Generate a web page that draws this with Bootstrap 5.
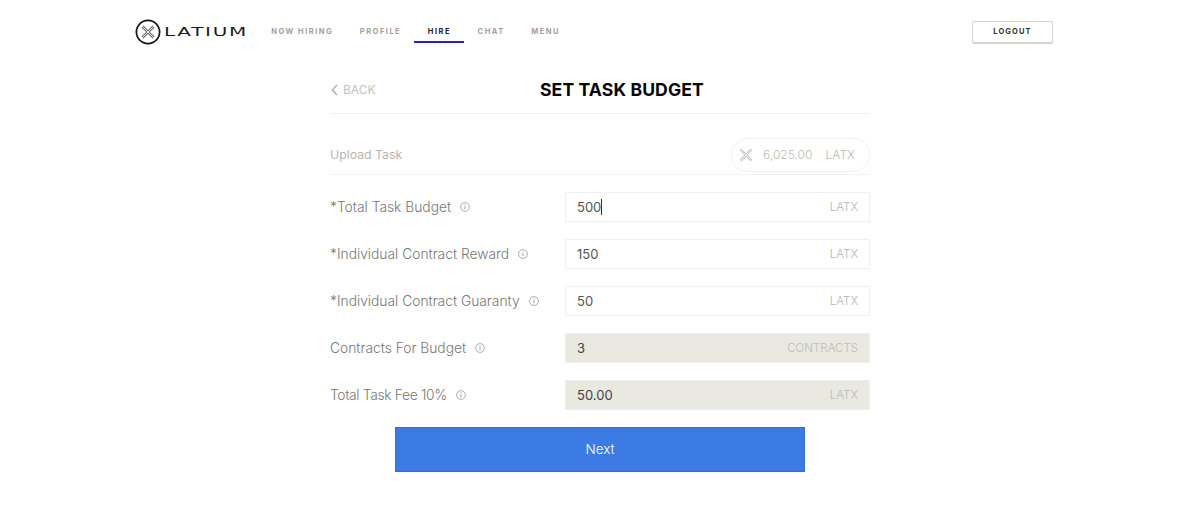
<!DOCTYPE html>
<html lang="en">
<head>
  <meta charset="UTF-8" />
  <title>Set Task Budget - Latium</title>
  <link href="https://cdn.jsdelivr.net/npm/bootstrap@5.3.0/dist/css/bootstrap.min.css" rel="stylesheet" />
  <style>
    body {
      background-color: #fff;
      font-family: Inter, "Open Sans", sans-serif;
      color: #8f8f8f;
    }
    .top-bar {
      width: 918px;
      height: 64px;
      margin-left: 135px;
    }
    .logo-text {
      font-family: "DejaVu Sans", sans-serif;
      font-size: 20px;
      line-height: 1;
      letter-spacing: 1.7px;
      color: #1c1c1c;
      margin-left: 3px;
      font-weight: 400;
      transform: scaleY(.6);
      transform-origin: center;
    }
    .top-links { margin-left: 10px; gap: 0; }
    .top-link {
      font-size: 7.5px;
      font-weight: 700;
      letter-spacing: 1.5px;
      color: #a39f9f;
      text-decoration: none;
      height: 22px;
      padding: 5px 13.3px 0;
      border-bottom: 2px solid transparent;
      white-space: nowrap;
    }
    .top-link.on { color: #222; border-bottom-color: #2a1fc7; }
    .logout-btn {
      width: 81px;
      height: 23px;
      padding: 1px 0 0;
      font-size: 7.5px;
      font-weight: 700;
      letter-spacing: 1.1px;
      color: #333;
      background: #fff;
      border: 1px solid #d4d4d4;
      border-bottom-width: 2px;
      border-radius: 2px;
    }
    .form-box { width: 540px; margin-left: 330px; }
    .head-row {
      height: 50px;
      padding-top: 2px;
      border-bottom: 1px solid #eeeeee;
    }
    .back-link {
      font-size: 12px;
      color: #c4c2c0;
      text-decoration: none;
      gap: 5px;
      width: 210px;
      padding-left: 1px;
    }
    .page-title {
      font-size: 17.6px;
      font-weight: 700;
      color: #050505;
      margin: 0;
      letter-spacing: .1px;
    }
    .upload-row {
      height: 61px;
      padding-top: 22px;
      border-bottom: 1px solid #f2f2f2;
      font-size: 12.3px;
      color: #b5b5b5;
    }
    .balance-pill {
      width: 139px;
      height: 34px;
      border: 1px solid #f3f3f3;
      border-radius: 17px;
      padding: 0 14px 0 7px;
      font-size: 12px;
      font-weight: 300;
      color: #b9b9b9;
    }
    .pill-value { margin-left: 10px; }
    .budget-row { height: 30px; margin-top: 17px; }
    .budget-label {
      width: 235px;
      font-size: 13.8px;
      font-weight: 300;
      color: #777;
      white-space: nowrap;
    }
    .budget-label.tight { letter-spacing: -.33px; }
    .info-mark { margin-left: 9px; flex: none; }
    .budget-field {
      width: 305px;
      height: 30px;
      border: 1px solid #f0f0f0;
      padding: 1px 11px 0 11px;
      font-size: 13px;
      color: #555;
    }
    .budget-field.locked {
      background-color: #e9e8e1;
      border-color: #eeede7;
      color: #444;
    }
    .unit { font-size: 11.5px; font-weight: 300; color: #b5b5b5; margin-top: 1px; }
    .locked .unit { color: #bcbcb6; }
    .caret-line {
      display: inline-block;
      width: 1px;
      height: 16px;
      background: #333;
      vertical-align: -3px;
    }
    .next-btn {
      display: block;
      width: 410px;
      height: 45px;
      margin: 17px 0 0 65px;
      padding: 0;
      font-size: 13.5px;
      font-weight: 300;
      color: #fff;
      background-color: #3c7ae4;
      border: 1px solid #2f6fdf;
      border-radius: 0;
    }
  </style>
</head>
<body>

  <div class="top-bar d-flex align-items-center">
    <svg width="26" height="26" viewBox="0 0 26 26" fill="none">
      <circle cx="13" cy="13" r="11.6" stroke="#151515" stroke-width="1.7"/>
      <path d="M7.5 7.5l11 11M18.5 7.5l-11 11" stroke="#666" stroke-width="2.6"/>
      <path d="M7.5 7.5l11 11M18.5 7.5l-11 11" stroke="#fff" stroke-width=".9"/>
    </svg>
    <span class="logo-text">LATIUM</span>
    <nav class="top-links d-flex">
      <a class="top-link" href="#">NOW HIRING</a>
      <a class="top-link" href="#">PROFILE</a>
      <a class="top-link on" href="#">HIRE</a>
      <a class="top-link" href="#">CHAT</a>
      <a class="top-link" href="#">MENU</a>
    </nav>
    <button class="logout-btn btn ms-auto" type="button">LOGOUT</button>
  </div>

  <div class="form-box">
    <div class="head-row d-flex align-items-center">
      <a class="back-link d-flex align-items-center" href="#">
        <svg width="7" height="12" viewBox="0 0 7 12" fill="none"><path d="M6 1L1.2 6 6 11" stroke="#a9a9a9" stroke-width="1.2"/></svg>
        BACK
      </a>
      <h1 class="page-title">SET TASK BUDGET</h1>
    </div>

    <div class="upload-row d-flex align-items-center justify-content-between">
      <span>Upload Task</span>
      <div class="balance-pill d-flex align-items-center">
        <svg width="14" height="14" viewBox="0 0 14 14" fill="none"><path d="M1.5 1.5l11 11M12.5 1.5l-11 11" stroke="#bdbdbd" stroke-width="2.4"/><path d="M1.5 1.5l11 11M12.5 1.5l-11 11" stroke="#fff" stroke-width=".8"/></svg>
        <span class="pill-value">6,025.00</span>
        <span class="ms-auto">LATX</span>
      </div>
    </div>

    <div id="budgetRows"></div>

    <button class="next-btn btn" type="button">Next</button>
  </div>

  <script>
    const rows = [
      { label: '*Total Task Budget', value: '500', unit: 'LATX', caret: true },
      { label: '*Individual Contract Reward', value: '150', unit: 'LATX' },
      { label: '*Individual Contract Guaranty', value: '50', unit: 'LATX' },
      { label: 'Contracts For Budget', value: '3', unit: 'CONTRACTS', locked: true },
      { label: 'Total Task Fee 10%', value: '50.00', unit: 'LATX', locked: true, tight: true }
    ];

    const infoIcon = `<svg class="info-mark" width="10" height="10" viewBox="0 0 10 10" fill="none">
      <circle cx="5" cy="5" r="4.4" stroke="#9a9a9a" stroke-width=".8"/>
      <path d="M5 4.3v3M5 2.4v1" stroke="#9a9a9a" stroke-width="1"/></svg>`;

    document.getElementById('budgetRows').innerHTML = rows.map(r => `
      <div class="budget-row d-flex align-items-center">
        <div class="budget-label d-flex align-items-center ${r.tight ? 'tight' : ''}">${r.label}${infoIcon}</div>
        <div class="budget-field d-flex align-items-center justify-content-between ${r.locked ? 'locked' : ''}">
          <span>${r.value}${r.caret ? '<span class="caret-line"></span>' : ''}</span>
          <span class="unit">${r.unit}</span>
        </div>
      </div>`).join('');
  </script>
  <script src="https://cdn.jsdelivr.net/npm/bootstrap@5.3.0/dist/js/bootstrap.bundle.min.js"></script>
</body>
</html>
